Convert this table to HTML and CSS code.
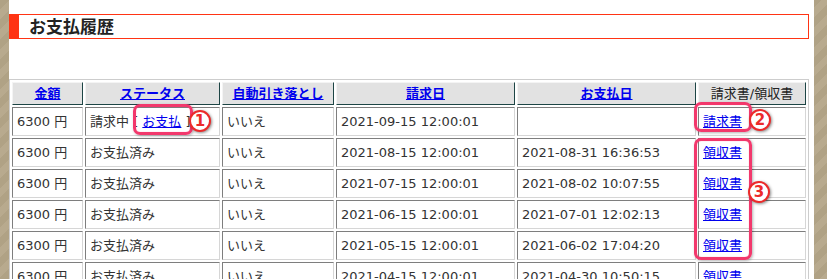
FILE: index.html
```html
<!DOCTYPE html>
<html lang="ja">
<head>
<meta charset="utf-8">
<title>お支払履歴</title>
<link rel="stylesheet" href="styles.css">
</head>
<body>
<div class="page">
  <h2 class="title">お支払履歴</h2>
  <table class="history">
    <colgroup>
      <col class="c1"><col class="c2"><col class="c3"><col class="c4"><col class="c5"><col class="c6">
    </colgroup>
    <thead>
      <tr>
        <th><a href="#">金額</a></th>
        <th><a href="#">ステータス</a></th>
        <th><a href="#">自動引き落とし</a></th>
        <th><a href="#">請求日</a></th>
        <th><a href="#">お支払日</a></th>
        <th class="plain">請求書/領収書</th>
      </tr>
    </thead>
    <tbody>
      <tr><td>6300 円</td><td>請求中 [ <a href="#">お支払</a> ]</td><td>いいえ</td><td>2021-09-15 12:00:01</td><td></td><td><a href="#">請求書</a></td></tr>
      <tr><td>6300 円</td><td>お支払済み</td><td>いいえ</td><td>2021-08-15 12:00:01</td><td>2021-08-31 16:36:53</td><td><a href="#">領収書</a></td></tr>
      <tr><td>6300 円</td><td>お支払済み</td><td>いいえ</td><td>2021-07-15 12:00:01</td><td>2021-08-02 10:07:55</td><td><a href="#">領収書</a></td></tr>
      <tr><td>6300 円</td><td>お支払済み</td><td>いいえ</td><td>2021-06-15 12:00:01</td><td>2021-07-01 12:02:13</td><td><a href="#">領収書</a></td></tr>
      <tr><td>6300 円</td><td>お支払済み</td><td>いいえ</td><td>2021-05-15 12:00:01</td><td>2021-06-02 17:04:20</td><td><a href="#">領収書</a></td></tr>
      <tr><td>6300 円</td><td>お支払済み</td><td>いいえ</td><td>2021-04-15 12:00:01</td><td>2021-04-30 10:50:15</td><td><a href="#">領収書</a></td></tr>
    </tbody>
  </table>

  <div class="mark box1"></div>
  <div class="num n1">1</div>
  <div class="mark box2"></div>
  <div class="num n2">2</div>
  <div class="mark box3"></div>
  <div class="num n3">3</div>
</div>
</body>
</html>
```
FILE: styles.css
```css
html, body {
  margin: 0;
  padding: 0;
}
body {
  height: 279px;
  overflow: hidden;
  background: repeating-linear-gradient(135deg, #b0a285 0 7px, #b8aa8e 7px 14px);
  font-family: "DejaVu Sans", "Noto Sans CJK JP", sans-serif;
  font-size: 13px;
  color: #333;
}
.page {
  position: relative;
  margin-left: 9px;
  width: 805px;
  height: 279px;
  background: #fff;
  padding-top: 14px;
  box-sizing: border-box;
}
.title {
  margin: 0;
  width: 800px;
  box-sizing: border-box;
  height: 25px;
  border: 1px solid #ff3414;
  border-left-width: 10px;
  padding-left: 10px;
  font-family: "Noto Sans CJK JP", sans-serif;
  font-weight: bold;
  font-size: 17px;
  line-height: 22px;
  color: #222;
}
.history {
  margin-top: 40px;
  width: 800px;
  table-layout: fixed;
  border-collapse: separate;
  border-spacing: 2px;
  border: 1px solid #cdcdcd;
}
.c1 { width: 71px; }
.c2 { width: 135px; }
.c3 { width: 112px; }
.c4 { width: 179px; }
.c5 { width: 179px; }
.c6 { width: 108px; }
.history th {
  background: #e2e2e2;
  border: 1px solid;
  border-color: #f4f4f4 #1d4545 #1d4545 #f4f4f4;
  padding: 0;
  line-height: 21px;
  font-weight: bold;
  text-align: center;
  white-space: nowrap;
}
.history th.plain {
  font-weight: normal;
  color: #222;
}
.history a {
  color: #0000ee;
  text-decoration: underline;
}
.history td {
  border: 1px solid;
  border-color: #7e7e7e #d6d6d6 #d6d6d6 #7e7e7e;
  padding: 0 4px;
  line-height: 27px;
  white-space: nowrap;
  overflow: hidden;
}
.mark {
  position: absolute;
  box-sizing: border-box;
  border: 3px solid #f2386c;
  border-radius: 7px;
  box-shadow: 1px 1px 3px rgba(0, 0, 0, 0.3), inset 0 0 1px rgba(242, 56, 108, 0.6);
}
.box1 { left: 124px; top: 104px; width: 60px; height: 31px; }
.box2 { left: 685px; top: 102px; width: 58px; height: 30px; }
.box3 { left: 685px; top: 138px; width: 58px; height: 122px; }
.num {
  position: absolute;
  box-sizing: border-box;
  width: 22px;
  height: 22px;
  border-radius: 50%;
  background: #fff;
  border: 2px solid #ec2a2a;
  color: #ec2a2a;
  font-family: "DejaVu Sans", sans-serif;
  font-weight: bold;
  font-size: 15px;
  line-height: 18px;
  text-align: center;
  box-shadow: 1px 1px 3px rgba(0, 0, 0, 0.45);
}
.n1 { left: 180px; top: 110px; }
.n2 { left: 740px; top: 109px; }
.n3 { left: 739px; top: 181px; }
```
